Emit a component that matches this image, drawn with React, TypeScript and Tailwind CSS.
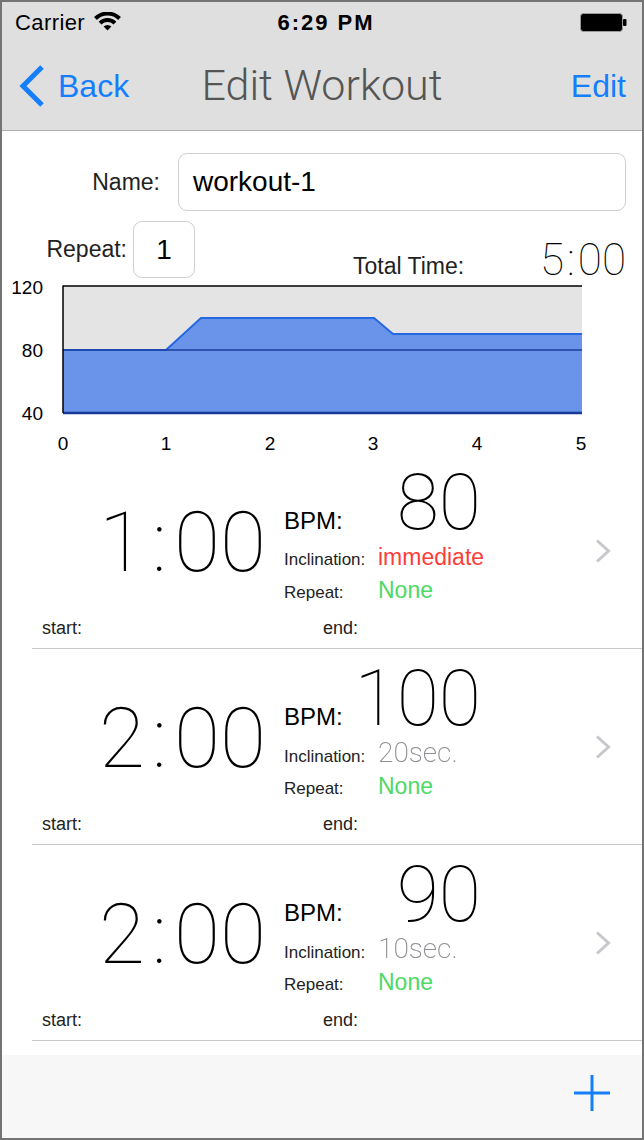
import React from "react";

type Row = {
  time: string;
  bpm: string;
  incl: string;
  inclThin: boolean;
  repeat: string;
};

const rows: Row[] = [
  { time: "1:00", bpm: "80", incl: "immediate", inclThin: false, repeat: "None" },
  { time: "2:00", bpm: "100", incl: "20sec.", inclThin: true, repeat: "None" },
  { time: "2:00", bpm: "90", incl: "10sec.", inclThin: true, repeat: "None" },
];

const sector = (cx: number, cy: number, r0: number, r1: number) => {
  const a0 = (-135 * Math.PI) / 180;
  const a1 = (-45 * Math.PI) / 180;
  const p = (r: number, a: number) =>
    `${(cx + r * Math.cos(a)).toFixed(2)} ${(cy + r * Math.sin(a)).toFixed(2)}`;
  if (r0 === 0) {
    return `M ${cx} ${cy} L ${p(r1, a0)} A ${r1} ${r1} 0 0 1 ${p(r1, a1)} Z`;
  }
  return `M ${p(r1, a0)} A ${r1} ${r1} 0 0 1 ${p(r1, a1)} L ${p(r0, a1)} A ${r0} ${r0} 0 0 0 ${p(r0, a0)} Z`;
};

const Wifi = () => (
  <svg width="27" height="19" viewBox="0 0 27 19">
    <path d={sector(13.5, 18.5, 0, 5.5)} fill="#000" />
    <path d={sector(13.5, 18.5, 8.5, 12.5)} fill="#000" />
    <path d={sector(13.5, 18.5, 15, 19)} fill="#000" />
  </svg>
);

const Battery = () => (
  <svg width="48" height="19" viewBox="0 0 48 19">
    <rect x="0.5" y="0.5" width="42" height="18" rx="3" fill="#000" stroke="#9a9a9a" />
    <rect x="43" y="6" width="3.5" height="7" rx="1" fill="#000" />
  </svg>
);

// splits "1:00" so the colon gets its own spacing, like the thin clock face
const Clock = ({ value, gap }: { value: string; gap: string }) => {
  const [m, s] = value.split(":");
  return (
    <>
      <span>{m}</span>
      <span className={gap}>:</span>
      <span>{s}</span>
    </>
  );
};

const Chart = () => {
  // x: 0..5 -> 61..580, y: 40..120 -> 135..8
  const xs = [61, 164, 268, 371, 475, 579];
  const area = "M61 72 L164 72 L199 40 L372 40 L391 56 L580 56 L580 135 L61 135 Z";
  const line = "M61 72 L164 72 L199 40 L372 40 L391 56 L580 56";
  return (
    <svg width="640" height="175" viewBox="0 0 640 175" className="block overflow-visible">
      <rect x="61" y="8" width="519" height="127" fill="#e4e4e4" />
      <path d={area} fill="#6a94ea" />
      <path d={line} fill="none" stroke="#2667e4" strokeWidth="2" />
      <line x1="61" y1="72" x2="580" y2="72" stroke="#1d3f9c" strokeWidth="1.3" />
      <line x1="61" y1="135" x2="580" y2="135" stroke="#173a99" strokeWidth="2.5" />
      <line x1="61" y1="8" x2="580" y2="8" stroke="#000" strokeWidth="1.5" />
      <line x1="61" y1="7.5" x2="61" y2="135" stroke="#000" strokeWidth="1.5" />
      <g className="font-['Liberation_Sans',Arial,sans-serif] text-[19px]" fill="#000">
        <text x="41" y="9" textAnchor="end" dominantBaseline="central">120</text>
        <text x="41" y="72" textAnchor="end" dominantBaseline="central">80</text>
        <text x="41" y="135" textAnchor="end" dominantBaseline="central">40</text>
        {xs.map((x, i) => (
          <text key={i} x={x} y="165" textAnchor="middle" dominantBaseline="central">
            {i}
          </text>
        ))}
      </g>
    </svg>
  );
};

const WorkoutRow = ({ row }: { row: Row }) => (
  <div className="h-[196px] flex flex-col">
    <div className="h-[155px] flex items-start">
      <div className="w-[264px] mt-[48px] text-right font-['Roboto',sans-serif] font-thin text-[84px] leading-none text-black">
        <Clock value={row.time} gap="mx-[7px]" />
      </div>
      <div className="ml-[18px] w-[197px] mt-[12px] flex flex-col">
        <div className="flex items-baseline justify-between h-[77px]">
          <span className="text-[24px] text-black">BPM:</span>
          <span className="font-['Roboto',sans-serif] font-thin text-[77px] leading-none text-black">
            {row.bpm}
          </span>
        </div>
        <div className="flex items-baseline h-[32px]">
          <span className="w-[94px] shrink-0 text-[17px] leading-[30px] text-[#222]">Inclination:</span>
          {row.inclThin ? (
            <span className="font-['Roboto',sans-serif] font-extralight text-[28px] leading-[30px] text-[#8e8e93] will-change-transform">
              {row.incl}
            </span>
          ) : (
            <span className="text-[23px] leading-[30px] text-[#fc3d39]">{row.incl}</span>
          )}
        </div>
        <div className="flex items-baseline h-[32px]">
          <span className="w-[94px] shrink-0 text-[17px] leading-[32px] text-[#222]">Repeat:</span>
          <span className="text-[23px] leading-[32px] text-[#4cd964]">{row.repeat}</span>
        </div>
      </div>
      <svg width="18" height="26" viewBox="0 0 18 26" className="ml-[113px] mt-[85px]">
        <path d="M3 2.5 L14.5 13 L3 23.5" fill="none" stroke="#c7c7cc" strokeWidth="3" />
      </svg>
    </div>
    <div className="h-[40px] flex items-center text-[18px] text-[#222]">
      <span className="ml-[40px] w-[281px]">start:</span>
      <span>end:</span>
    </div>
    <div className="ml-[30px] h-px bg-[#c8c7cc]" />
  </div>
);

export default function App() {
  return (
    <div className="w-[644px] h-[1140px] border-2 border-[#737373] bg-white flex flex-col overflow-hidden font-['Liberation_Sans',Arial,sans-serif] text-black">
      <div className="bg-[#dfdfdf] border-b border-[#b1b1b1] h-[129px] shrink-0 flex flex-col">
        <div className="h-[40px] relative flex items-center px-[13px]">
          <span className="text-[22px] tracking-[0.4px]">Carrier</span>
          <span className="ml-[9px] mt-[-2px]">
            <Wifi />
          </span>
          <span className="absolute left-0 right-0 text-center font-bold text-[22px] tracking-[2px] pl-[8px] pointer-events-none">
            6:29 PM
          </span>
          <span className="ml-auto mr-[1px]">
            <Battery />
          </span>
        </div>
        <div className="h-[88px] grid grid-cols-[1fr_auto_1fr] items-center">
          <div className="flex items-center pl-[16px] text-[#157efb]">
            <svg width="28" height="44" viewBox="0 0 28 44">
              <path d="M24 3 L5 22 L24 41" fill="none" stroke="#157efb" strokeWidth="5" />
            </svg>
            <span className="ml-[12px] text-[32px]">Back</span>
          </div>
          <div className="font-['Roboto',sans-serif] font-light text-[43px] text-[#555555] leading-none pb-[2px]">
            Edit Workout
          </div>
          <div className="flex justify-end pr-[16px] text-[32px] text-[#157efb]">Edit</div>
        </div>
      </div>

      <div className="mt-[22px] flex items-center h-[58px]">
        <div className="w-[158px] text-right text-[23px] text-[#222]">Name:</div>
        <div className="ml-[18px] w-[448px] h-[58px] border border-[#cfcfcf] rounded-[9px] flex items-center pl-[14px] text-[28px]">
          workout-1
        </div>
      </div>

      <div className="mt-[10px] flex items-start h-[57px]">
        <div className="w-[125px] h-[57px] flex items-center justify-end text-[23px] text-[#222]">
          Repeat:
        </div>
        <div className="ml-[6px] w-[62px] h-[57px] border border-[#cfcfcf] rounded-[9px] flex items-center justify-center text-[28px]">
          1
        </div>
        <div className="ml-[158px] mt-[32px] text-[23px] leading-[26px] text-[#222]">Total Time:</div>
        <div className="ml-auto mr-[16px] mt-[17px] font-['Roboto',sans-serif] font-thin text-[44px] leading-none">
          <Clock value="5:00" gap="mx-[3px]" />
        </div>
      </div>

      <Chart />

      <div className="flex flex-col">
        {rows.map((r, i) => (
          <WorkoutRow key={i} row={r} />
        ))}
      </div>

      <div className="mt-auto h-[83px] bg-[#f7f7f7] flex justify-end items-start">
        <svg width="36" height="36" viewBox="0 0 36 36" className="mt-[20px] mr-[32px]">
          <line x1="18" y1="0" x2="18" y2="36" stroke="#157efb" strokeWidth="3" />
          <line x1="0" y1="18" x2="36" y2="18" stroke="#157efb" strokeWidth="3" />
        </svg>
      </div>
    </div>
  );
}
